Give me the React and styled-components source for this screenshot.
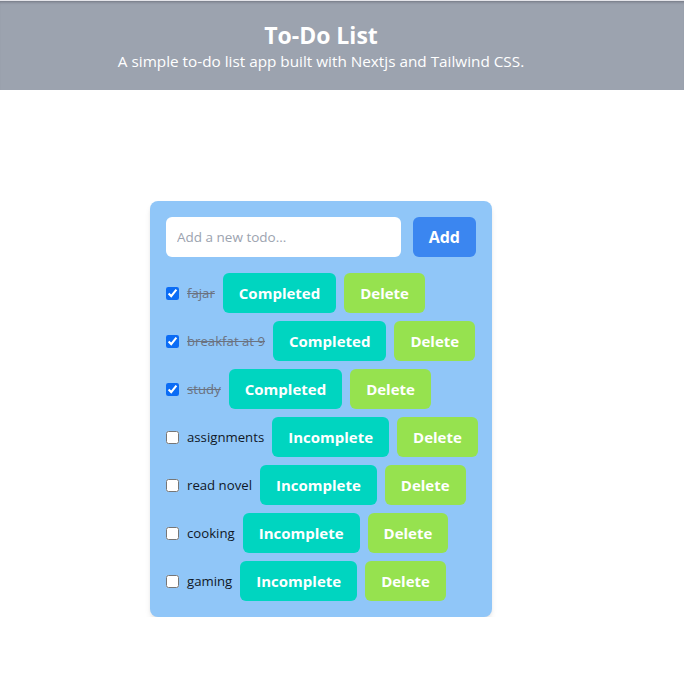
import React from "react";
import styled, { createGlobalStyle } from "styled-components";

const Global = createGlobalStyle`
  * { box-sizing: border-box; }
  html, body { margin: 0; padding: 0; background: #ffffff; }
  body { font-family: "Open Sans", "Noto Sans", sans-serif; color: #111827; }
`;

const Header = styled.header`
  background: #9ca3af;
  height: 90px;
  padding-top: 18px;
  padding-right: 42px;
  display: flex;
  flex-direction: column;
  align-items: center;
  box-shadow: inset 0 3px 3px -2px rgba(60, 60, 70, 0.45);
  border-top: 1px solid #e5e5ea;
`;

const Title = styled.h1`
  margin: 0;
  font-size: 23px;
  line-height: 32px;
  font-weight: 700;
  color: #ffffff;
`;

const Subtitle = styled.p`
  margin: 0;
  font-size: 15.3px;
  line-height: 20px;
  color: #ffffff;
`;

const Main = styled.main`
  padding: 111px 0 0 150px;
`;

const Card = styled.section`
  width: 342px;
  background: #90c6f8;
  border-radius: 8px;
  padding: 16px;
  box-shadow: 0 4px 6px -1px rgba(0, 0, 0, 0.1), 0 2px 4px -2px rgba(0, 0, 0, 0.1);
`;

const Form = styled.form`
  display: flex;
  gap: 12px;
  margin-bottom: 16px;
`;

const Input = styled.input`
  flex: 1;
  min-width: 0;
  height: 40px;
  border: none;
  border-radius: 6px;
  padding: 0 11px;
  font-family: inherit;
  font-size: 13.5px;
  color: #111827;
  background: #ffffff;
  outline: none;
  &::placeholder { color: #9ca3af; }
`;

const Button = styled.button`
  flex-shrink: 0;
  height: 40px;
  border: none;
  border-radius: 6px;
  padding: 0 ${(p) => p.$px || 16}px;
  font-family: inherit;
  font-size: ${(p) => p.$fs || 15}px;
  font-weight: 700;
  color: #ffffff;
  background: ${(p) => p.$bg};
  cursor: pointer;
  white-space: nowrap;
`;

const List = styled.ul`
  list-style: none;
  margin: 0;
  padding: 0;
  display: flex;
  flex-direction: column;
  gap: 8px;
`;

const Row = styled.li`
  display: flex;
  align-items: center;
  height: 40px;
  gap: 8px;
`;

const Check = styled.input`
  flex-shrink: 0;
  width: 13px;
  height: 13px;
  margin: 0;
  accent-color: #0b6cf5;
`;

const Label = styled.span`
  flex-shrink: 0;
  white-space: nowrap;
  font-size: 13.2px;
  color: ${(p) => (p.$done ? "#6b7280" : "#111827")};
  text-decoration: ${(p) => (p.$done ? "line-through" : "none")};
`;

const todos = [
  { text: "fajar", done: true },
  { text: "breakfat at 9", done: true },
  { text: "study", done: true },
  { text: "assignments", done: false },
  { text: "read novel", done: false },
  { text: "cooking", done: false },
  { text: "gaming", done: false },
];

export default function App() {
  return (
    <>
      <Global />
      <Header>
        <Title>To-Do List</Title>
        <Subtitle>A simple to-do list app built with Nextjs and Tailwind CSS.</Subtitle>
      </Header>
      <Main>
        <Card>
          <Form onSubmit={(e) => e.preventDefault()}>
            <Input placeholder="Add a new todo..." />
            <Button type="submit" $bg="#3b86f0" $px={16} $fs={16}>Add</Button>
          </Form>
          <List>
            {todos.map((t) => (
              <Row key={t.text}>
                <Check type="checkbox" defaultChecked={t.done} />
                <Label $done={t.done}>{t.text}</Label>
                <Button $bg="#00d5c0">{t.done ? "Completed" : "Incomplete"}</Button>
                <Button $bg="#96e24f">Delete</Button>
              </Row>
            ))}
          </List>
        </Card>
      </Main>
    </>
  );
}
